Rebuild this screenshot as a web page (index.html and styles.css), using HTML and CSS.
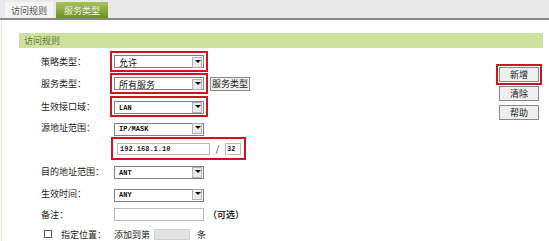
FILE: index.html
```html
<!DOCTYPE html>
<html lang="zh-CN">
<head>
    <meta charset="UTF-8">
    <meta name="viewport" content="width=device-width, initial-scale=1.0">
    <title>访问规则</title>
    <link rel="stylesheet" href="styles.css">
</head>
<body>
    <div class="tabs">
        <span class="tab">访问规则</span>
        <span class="tab active">服务类型</span>
    </div>

    <div class="page">
        <div class="section-title">访问规则</div>

        <div class="main">
            <div class="form">
                <label class="label">策略类型：</label>
                <div class="field">
                    <span class="select mark"><select><option>允许</option></select></span>
                </div>

                <label class="label">服务类型：</label>
                <div class="field">
                    <span class="select mark"><select><option>所有服务</option></select></span>
                    <button class="btn btn-wide">服务类型</button>
                </div>

                <label class="label">生效接口域：</label>
                <div class="field">
                    <span class="select mark"><select class="mono"><option>LAN</option></select></span>
                </div>

                <label class="label">源地址范围：</label>
                <div class="field">
                    <span class="select"><select class="mono"><option>IP/MASK</option></select></span>
                </div>

                <span class="label"></span>
                <div class="field">
                    <span class="ip-group mark">
                        <input type="text" class="input ip mono" value="192.168.1.10">
                        <span class="slash">/</span>
                        <input type="text" class="input mask mono" value="32">
                    </span>
                </div>

                <label class="label">目的地址范围：</label>
                <div class="field">
                    <span class="select"><select class="mono"><option>ANT</option></select></span>
                </div>

                <label class="label">生效时间：</label>
                <div class="field">
                    <span class="select"><select class="mono"><option>ANY</option></select></span>
                </div>

                <label class="label">备注：</label>
                <div class="field">
                    <input type="text" class="input note">
                    <span class="hint">（可选）</span>
                </div>

                <div class="label check-label">
                    <input type="checkbox" class="check">
                    <span>指定位置：</span>
                </div>
                <div class="field">
                    <span>添加到第</span>
                    <input type="text" class="input pos">
                    <span>条</span>
                </div>
            </div>

            <div class="actions">
                <button class="btn mark-btn">新增</button>
                <button class="btn">清除</button>
                <button class="btn">帮助</button>
            </div>
        </div>
    </div>
</body>
</html>
```

FILE: styles.css
```css
* {
    margin: 0;
    padding: 0;
    box-sizing: border-box;
}

body {
    font-family: "Noto Sans CJK SC", "Noto Sans", sans-serif;
    font-size: 9px;
    color: #222;
    background-color: #fff;
    width: 549px;
    height: 241px;
    overflow: hidden;
}

/* 상단 탭 */
.tabs {
    display: flex;
    align-items: flex-end;
    gap: 3px;
    height: 20px;
    padding-left: 5px;
    background-color: #e9e9e9;
    border-bottom: 2px solid #8a8a8a;
}

.tab {
    display: flex;
    align-items: center;
    width: 48px;
    height: 16px;
    padding-left: 6px;
    background-color: #f4f4f4;
    color: #555;
    line-height: 1;
}

.tab.active {
    width: 52px;
    justify-content: center;
    padding-left: 0;
    background: linear-gradient(#a9c45c, #6f8e26);
    color: #eef5dc;
}

.page {
    height: 221px;
    margin-left: 1px;
    padding: 13px 6px 0 17px;
    border-left: 1px solid #dfead0;
}

.section-title {
    height: 15px;
    padding-left: 5px;
    line-height: 15px;
    background-color: #cee29e;
    color: #617a3c;
}

.main {
    display: flex;
    margin-top: 2px;
}

.form {
    display: grid;
    grid-template-columns: 73px auto;
    grid-template-rows: 22px 23px 22px 21px 21px 24px 21px 20px 20px;
    padding-left: 22px;
}

.label {
    display: flex;
    align-items: center;
    color: #222;
}

.field {
    display: flex;
    align-items: center;
}

/* 선택 상자 */
.select {
    position: relative;
    display: inline-block;
    width: 90px;
    height: 13px;
}

.select select {
    width: 100%;
    height: 100%;
    padding-left: 4px;
    border: 1px solid #808080;
    background-color: #fff;
    font-family: inherit;
    font-size: 9px;
    color: #111;
    appearance: none;
    -webkit-appearance: none;
    border-radius: 0;
}

.select::after {
    content: "";
    position: absolute;
    top: 2px;
    right: 2px;
    width: 8px;
    height: 9px;
    border: 1px solid #b0b0b0;
    background-color: #ececec;
}

.select::before {
    content: "";
    position: absolute;
    z-index: 1;
    top: 5px;
    right: 3px;
    border-left: 3px solid transparent;
    border-right: 3px solid transparent;
    border-top: 3px solid #111;
}

.mono {
    font-family: "Liberation Mono", monospace !important;
    font-weight: bold;
    font-size: 7px !important;
}

.mark {
    outline: 2px solid #cc1424;
    outline-offset: 2px;
}

.mark-btn {
    outline: 2px solid #cc1424;
    outline-offset: 1px;
}

/* 버튼 */
.btn {
    height: 15px;
    width: 40px;
    border: 1px solid #8a8a8a;
    background-color: #efefef;
    font-family: inherit;
    font-size: 9px;
    color: #222;
    line-height: 1;
}

.btn-wide {
    height: 14px;
    margin-left: 6px;
}

/* 입력 */
.input {
    height: 12px;
    border: 1px solid #b8b8b8;
    background-color: #fff;
    color: #222;
    font-family: inherit;
    font-size: 9px;
    padding-left: 2px;
}

.ip-group {
    display: inline-flex;
    align-items: center;
    margin-left: -1px;
    padding: 3px 3px 3px 4px;
    outline-offset: 0;
}

.ip-group .ip {
    width: 93px;
}

.slash {
    width: 15px;
    text-align: center;
    color: #222;
}

.ip-group .mask {
    width: 16px;
    padding-left: 1px;
}

.note {
    width: 90px;
    height: 13px;
}

.hint {
    margin-left: 4px;
    font-weight: bold;
    color: #333;
}

.check-label {
    padding-left: 3px;
    gap: 9px;
}

.check {
    width: 8px;
    height: 8px;
    border: 1px solid #555;
    background-color: #fff;
    appearance: none;
    -webkit-appearance: none;
}

.pos {
    width: 36px;
    height: 11px;
    margin: 0 7px 0 4px;
    background-color: #e2e2e2;
    border-color: #d0d0d0;
}

/* 오른쪽 버튼 */
.actions {
    display: flex;
    flex-direction: column;
    gap: 4px;
    margin-left: auto;
    margin-right: 4px;
    padding-top: 17px;
}
```
